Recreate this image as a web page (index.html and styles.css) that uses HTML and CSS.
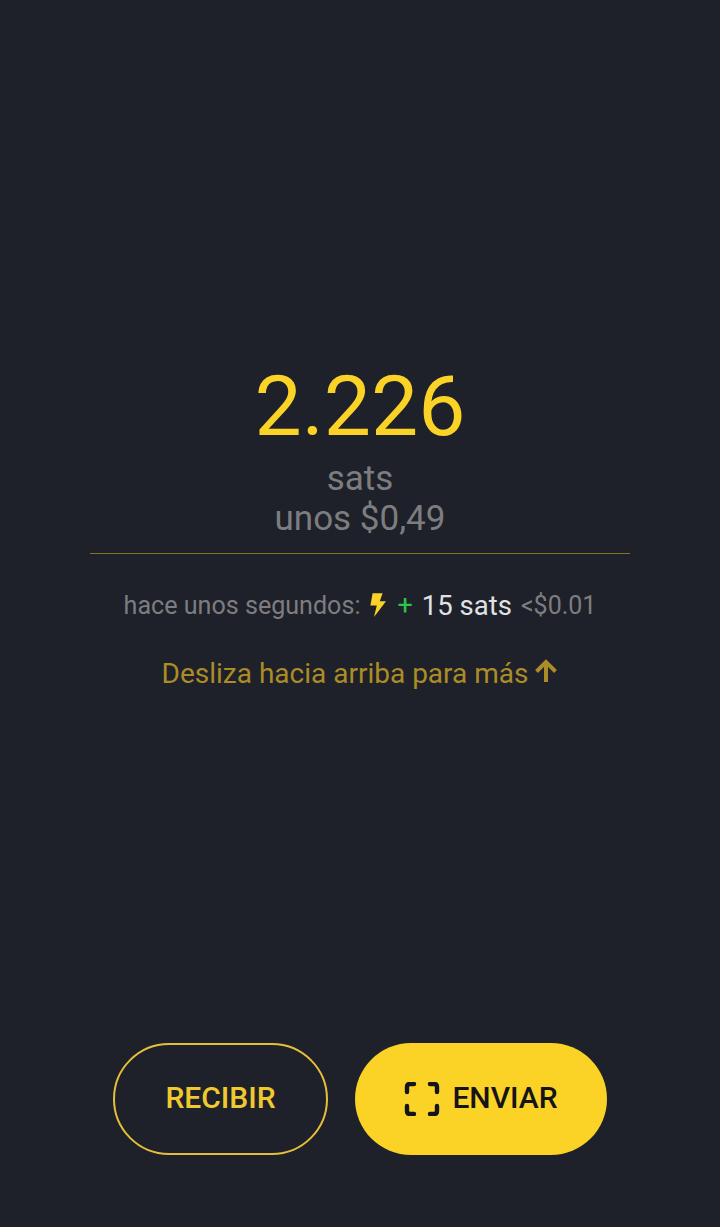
FILE: index.html
```html
<!DOCTYPE html>
<html lang="es">
<head>
<meta charset="utf-8">
<title>Wallet</title>
<link rel="stylesheet" href="styles.css">
</head>
<body>
<main class="screen">
  <section class="balance">
    <div class="amount">2.226</div>
    <div class="unit">sats</div>
    <div class="fiat">unos $0,49</div>
  </section>
  <hr class="divider">
  <p class="latest">
    <span>hace unos segundos:</span>
    <svg class="bolt" width="18" height="26" viewBox="0 0 18 26"><path fill="#fbd326" d="M3.600 1.200h10L10.800 9.200h6.200L5 25l2.800-11.400H1.400z"/></svg>
    <span class="plus">+</span>
    <span class="sats">15 sats</span>
    <span class="usd">&lt;$0.01</span>
  </p>
  <p class="hint">
    <span>Desliza hacia arriba para más</span>
    <svg class="arrow" width="24" height="24" viewBox="0 0 24 24"><path fill="none" stroke="#ac8c26" stroke-width="4" d="M12 23V4M2.500 12.500 12 3l9.500 9.500"/></svg>
  </p>
  <div class="actions">
    <button class="btn btn-outline" type="button"><span class="label">RECIBIR</span></button>
    <button class="btn btn-solid" type="button">
      <svg class="scan" width="36" height="34" viewBox="0 0 36 34"><path fill="none" stroke="#14141a" stroke-width="4.400" stroke-linecap="round" stroke-linejoin="round" d="M3 10V5q0-3 3-3h4M26 2h4q3 0 3 3v5M33 24v5q0 3-3 3h-4M10 32H6q-3 0-3-3v-5"/></svg>
      <span class="label">ENVIAR</span>
    </button>
  </div>
</main>
</body>
</html>
```
FILE: styles.css
```css
* { box-sizing: border-box; }
html, body { margin: 0; height: 100%; }
body { background: #1e2129; font-family: Roboto, "Liberation Sans", sans-serif; overflow: hidden; }
.screen { height: 1227px; display: flex; flex-direction: column; align-items: center; padding-top: 359px; }
.balance { display: flex; flex-direction: column; align-items: center; }
.amount { font-size: 84px; line-height: 96px; color: #fbd326; }
.unit { font-size: 35px; line-height: 41px; color: #7d7d80; margin-top: 3px; }
.fiat { font-size: 35px; line-height: 40px; color: #7d7d80; }
.divider { width: 540px; height: 1px; margin: 14px 0 0; border: 0; background: #8a7020; }
.latest { margin: 33px 0 0; height: 36px; display: flex; align-items: center; gap: 9px; font-size: 25.100px; color: #7d7d80; }
.bolt { flex: none; margin-right: 1px; }
.plus { color: #2fc24d; font-size: 27px; }
.sats { color: #e0e1e4; font-size: 27.500px; }
.usd { font-size: 25px; }
.hint { margin: 32px 0 0; height: 36px; display: flex; align-items: center; gap: 6px; font-size: 28px; color: #ac8c26; }
.arrow { flex: none; margin-top: -5px; }
.actions { margin-top: auto; margin-bottom: 72px; display: flex; gap: 27px; }
.btn { height: 112px; border-radius: 56px; font: 500 30px Roboto, "Liberation Sans", sans-serif; display: flex; align-items: center; justify-content: center; }
.label { margin-top: -4px; }
.btn-outline { width: 215px; background: transparent; border: 2px solid #e6bf38; color: #f0c92f; }
.btn-solid { width: 252px; gap: 12px; background: #fbd326; border: 0; color: #14141a; }
.scan { flex: none; }
```
